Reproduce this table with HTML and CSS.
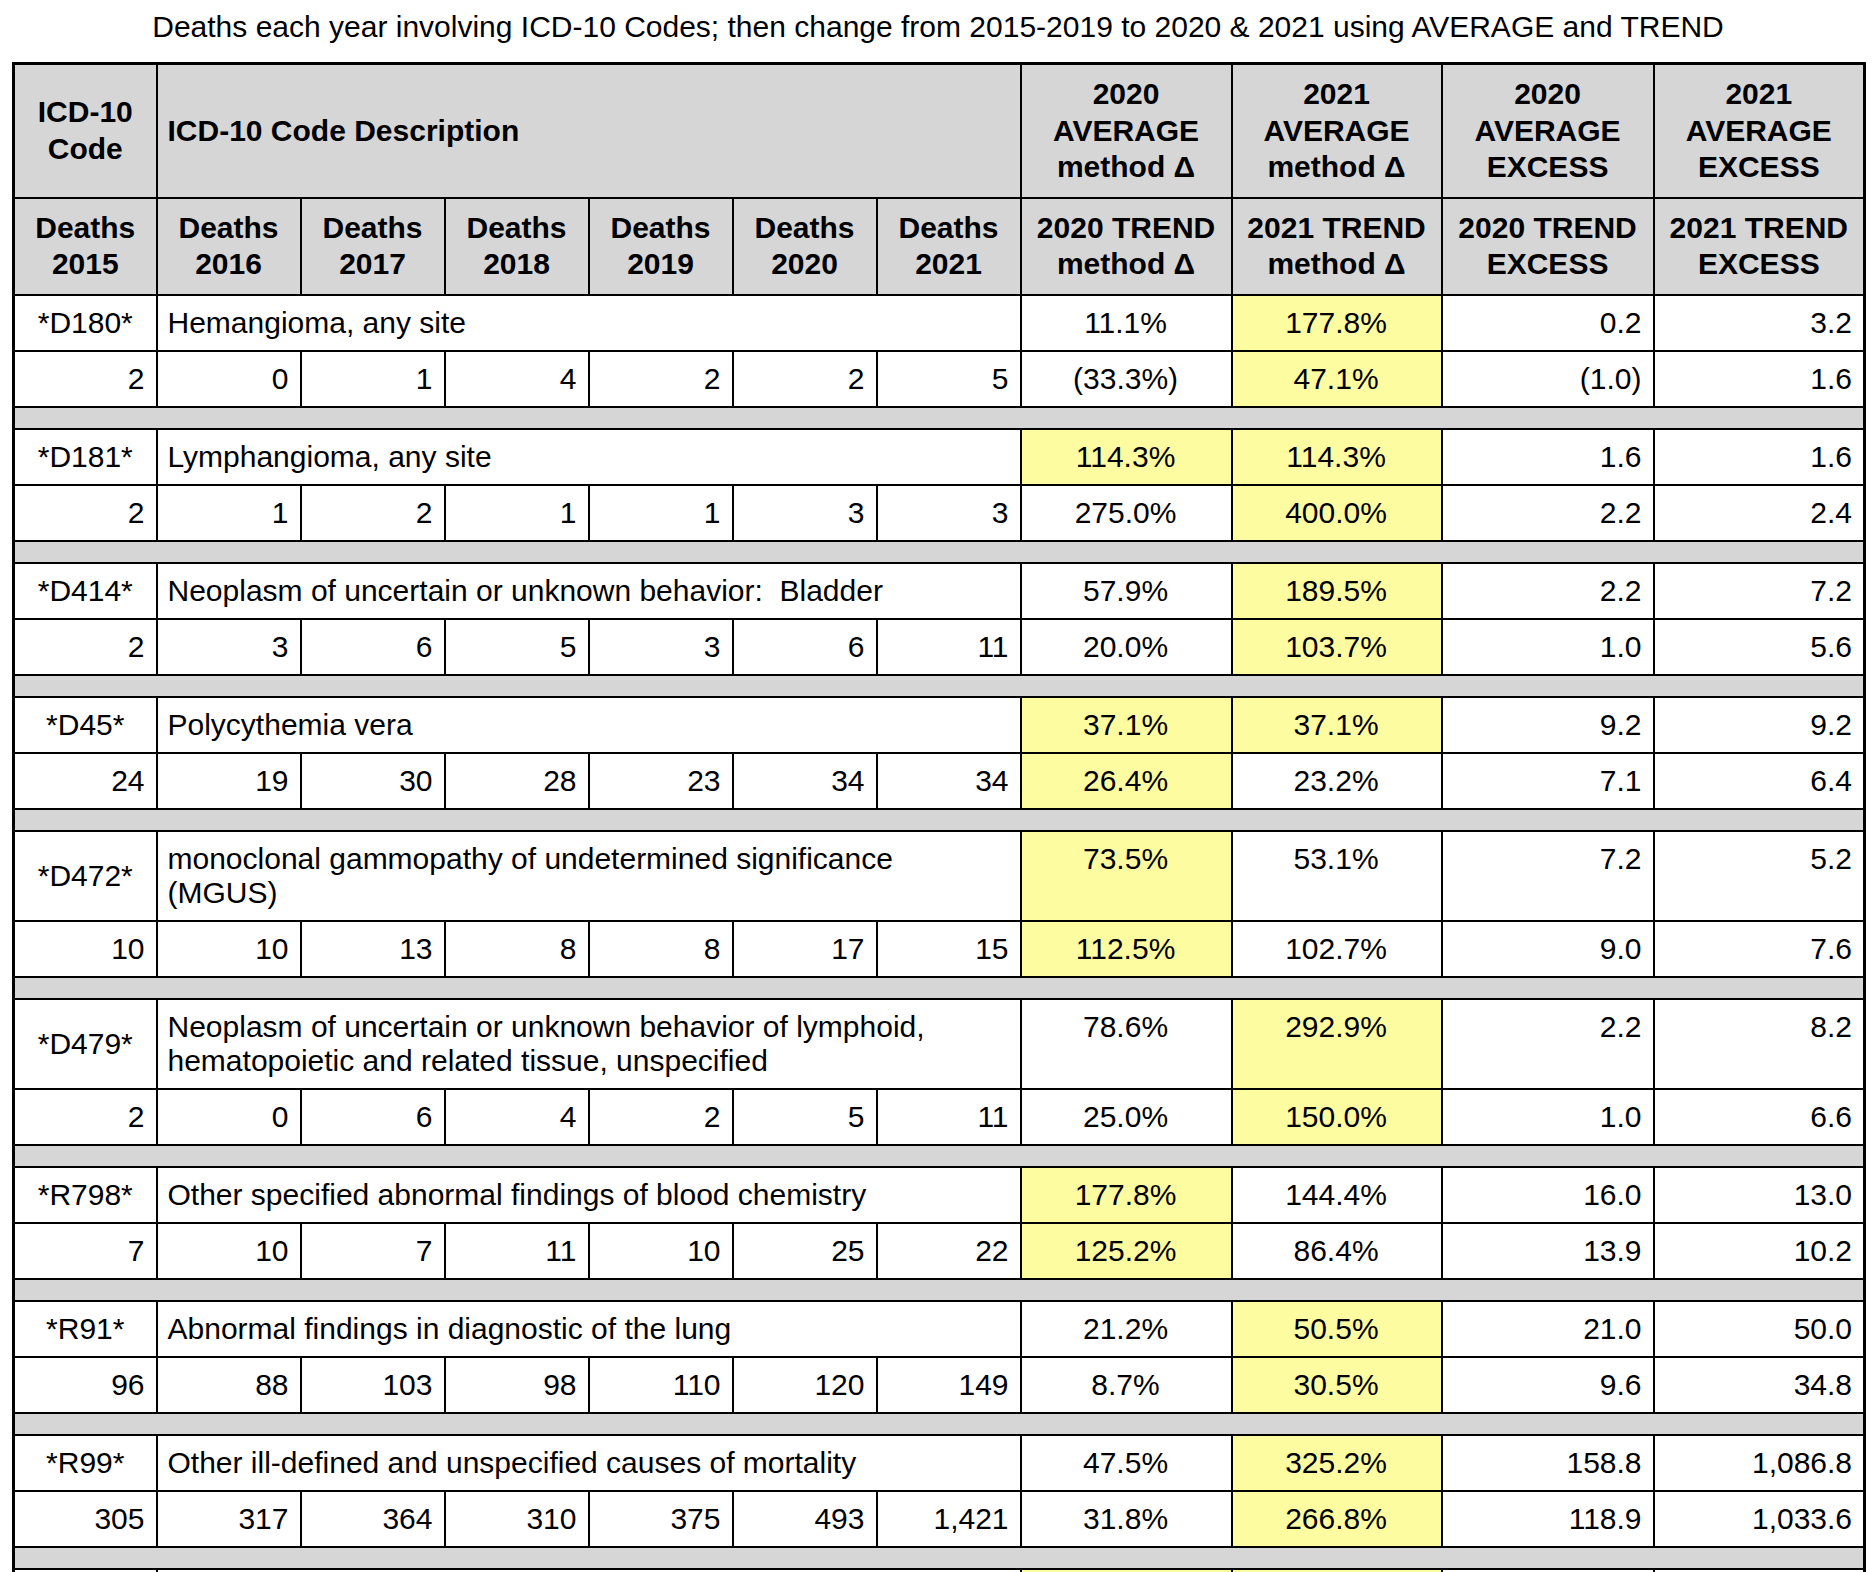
FILE: index.html
```html
<!DOCTYPE html>
<html>
<head>
<meta charset="utf-8">
<link rel="stylesheet" href="styles.css">
</head>
<body>
<div class="page">
<div class="title">Deaths each year involving ICD-10 Codes; then change from 2015-2019 to 2020 &amp; 2021 using AVERAGE and TREND</div>
<table class="grid">
<colgroup>
<col class="w-code"><col class="w-d"><col class="w-d"><col class="w-d"><col class="w-d"><col class="w-d"><col class="w-d">
<col class="w-x1"><col class="w-x2"><col class="w-x3"><col class="w-x4">
</colgroup>
<thead>
<tr class="h1">
<th>ICD-10<br>Code</th>
<th colspan="6" class="hl">ICD-10 Code Description</th>
<th>2020<br>AVERAGE<br>method Δ</th>
<th>2021<br>AVERAGE<br>method Δ</th>
<th>2020<br>AVERAGE<br>EXCESS</th>
<th>2021<br>AVERAGE<br>EXCESS</th>
</tr>
<tr class="h2">
<th>Deaths<br>2015</th>
<th>Deaths<br>2016</th>
<th>Deaths<br>2017</th>
<th>Deaths<br>2018</th>
<th>Deaths<br>2019</th>
<th>Deaths<br>2020</th>
<th>Deaths<br>2021</th>
<th>2020 TREND<br>method Δ</th>
<th>2021 TREND<br>method Δ</th>
<th>2020 TREND<br>EXCESS</th>
<th>2021 TREND<br>EXCESS</th>
</tr>
</thead>
<tbody>
<tr><td class="c">*D180*</td><td colspan="6" class="d">Hemangioma, any site</td><td class="p">11.1%</td><td class="p y">177.8%</td><td class="n">0.2</td><td class="n">3.2</td></tr>
<tr><td class="n">2</td><td class="n">0</td><td class="n">1</td><td class="n">4</td><td class="n">2</td><td class="n">2</td><td class="n">5</td><td class="p">(33.3%)</td><td class="p y">47.1%</td><td class="n">(1.0)</td><td class="n">1.6</td></tr>
<tr class="sep"><td colspan="11"><div class="bar"></div></td></tr>

<tr><td class="c">*D181*</td><td colspan="6" class="d">Lymphangioma, any site</td><td class="p y">114.3%</td><td class="p y">114.3%</td><td class="n">1.6</td><td class="n">1.6</td></tr>
<tr><td class="n">2</td><td class="n">1</td><td class="n">2</td><td class="n">1</td><td class="n">1</td><td class="n">3</td><td class="n">3</td><td class="p">275.0%</td><td class="p y">400.0%</td><td class="n">2.2</td><td class="n">2.4</td></tr>
<tr class="sep"><td colspan="11"><div class="bar"></div></td></tr>

<tr><td class="c">*D414*</td><td colspan="6" class="d">Neoplasm of uncertain or unknown behavior:&nbsp; Bladder</td><td class="p">57.9%</td><td class="p y">189.5%</td><td class="n">2.2</td><td class="n">7.2</td></tr>
<tr><td class="n">2</td><td class="n">3</td><td class="n">6</td><td class="n">5</td><td class="n">3</td><td class="n">6</td><td class="n">11</td><td class="p">20.0%</td><td class="p y">103.7%</td><td class="n">1.0</td><td class="n">5.6</td></tr>
<tr class="sep"><td colspan="11"><div class="bar"></div></td></tr>

<tr><td class="c">*D45*</td><td colspan="6" class="d">Polycythemia vera</td><td class="p y">37.1%</td><td class="p y">37.1%</td><td class="n">9.2</td><td class="n">9.2</td></tr>
<tr><td class="n">24</td><td class="n">19</td><td class="n">30</td><td class="n">28</td><td class="n">23</td><td class="n">34</td><td class="n">34</td><td class="p y">26.4%</td><td class="p">23.2%</td><td class="n">7.1</td><td class="n">6.4</td></tr>
<tr class="sep"><td colspan="11"><div class="bar"></div></td></tr>

<tr><td class="c">*D472*</td><td colspan="6" class="d">monoclonal gammopathy of undetermined significance (MGUS)</td><td class="p y">73.5%</td><td class="p">53.1%</td><td class="n">7.2</td><td class="n">5.2</td></tr>
<tr><td class="n">10</td><td class="n">10</td><td class="n">13</td><td class="n">8</td><td class="n">8</td><td class="n">17</td><td class="n">15</td><td class="p y">112.5%</td><td class="p">102.7%</td><td class="n">9.0</td><td class="n">7.6</td></tr>
<tr class="sep"><td colspan="11"><div class="bar"></div></td></tr>

<tr><td class="c">*D479*</td><td colspan="6" class="d">Neoplasm of uncertain or unknown behavior of lymphoid, hematopoietic and related tissue, unspecified</td><td class="p">78.6%</td><td class="p y">292.9%</td><td class="n">2.2</td><td class="n">8.2</td></tr>
<tr><td class="n">2</td><td class="n">0</td><td class="n">6</td><td class="n">4</td><td class="n">2</td><td class="n">5</td><td class="n">11</td><td class="p">25.0%</td><td class="p y">150.0%</td><td class="n">1.0</td><td class="n">6.6</td></tr>
<tr class="sep"><td colspan="11"><div class="bar"></div></td></tr>

<tr><td class="c">*R798*</td><td colspan="6" class="d">Other specified abnormal findings of blood chemistry</td><td class="p y">177.8%</td><td class="p">144.4%</td><td class="n">16.0</td><td class="n">13.0</td></tr>
<tr><td class="n">7</td><td class="n">10</td><td class="n">7</td><td class="n">11</td><td class="n">10</td><td class="n">25</td><td class="n">22</td><td class="p y">125.2%</td><td class="p">86.4%</td><td class="n">13.9</td><td class="n">10.2</td></tr>
<tr class="sep"><td colspan="11"><div class="bar"></div></td></tr>

<tr><td class="c">*R91*</td><td colspan="6" class="d">Abnormal findings in diagnostic of the lung</td><td class="p">21.2%</td><td class="p y">50.5%</td><td class="n">21.0</td><td class="n">50.0</td></tr>
<tr><td class="n">96</td><td class="n">88</td><td class="n">103</td><td class="n">98</td><td class="n">110</td><td class="n">120</td><td class="n">149</td><td class="p">8.7%</td><td class="p y">30.5%</td><td class="n">9.6</td><td class="n">34.8</td></tr>
<tr class="sep"><td colspan="11"><div class="bar"></div></td></tr>

<tr><td class="c">*R99*</td><td colspan="6" class="d">Other ill-defined and unspecified causes of mortality</td><td class="p">47.5%</td><td class="p y">325.2%</td><td class="n">158.8</td><td class="n">1,086.8</td></tr>
<tr><td class="n">305</td><td class="n">317</td><td class="n">364</td><td class="n">310</td><td class="n">375</td><td class="n">493</td><td class="n">1,421</td><td class="p">31.8%</td><td class="p y">266.8%</td><td class="n">118.9</td><td class="n">1,033.6</td></tr>
<tr class="sep"><td colspan="11"><div class="bar"></div></td></tr>

<tr class="next"><td class="c">&nbsp;</td><td colspan="6" class="d">&nbsp;</td><td class="p y">&nbsp;</td><td class="p y">&nbsp;</td><td class="n">&nbsp;</td><td class="n">&nbsp;</td></tr>
</tbody>
</table>
</div>
</body>
</html>
```
FILE: styles.css
```css
html, body {
  margin: 0;
  padding: 0;
  background: #ffffff;
}

.page {
  padding: 10px 0 0 12px;
  font-family: "Liberation Sans", Arial, Helvetica, sans-serif;
  color: #000;
}

.title {
  width: 1852px;
  text-align: center;
  font-size: 30px;
  line-height: 34px;
  margin-bottom: 18px;
}

.grid {
  border-collapse: collapse;
  table-layout: fixed;
  width: 1851px;
  border: 3px solid #000;
  font-size: 30px;
}

.w-code { width: 143px; }
.w-d { width: 144px; }
.w-x1 { width: 211px; }
.w-x2 { width: 210px; }
.w-x3 { width: 212px; }
.w-x4 { width: 211px; }

.grid th,
.grid td {
  border: 2px solid #000;
  overflow: hidden;
}

.grid th {
  background: #d6d6d6;
  font-weight: bold;
  line-height: 36.5px;
  padding: 11px 4px;
  text-align: center;
  vertical-align: middle;
  white-space: nowrap;
}

.grid th.hl {
  text-align: left;
  padding-left: 10px;
}

.grid td {
  line-height: 34px;
  padding: 10px 11px 10px 10px;
  vertical-align: top;
  background: #fff;
}

.grid td.c {
  text-align: center;
  vertical-align: middle;
  padding-left: 4px;
  padding-right: 4px;
}

.grid td.d {
  text-align: left;
}

.grid td.n {
  text-align: right;
}

.grid td.p {
  text-align: center;
}

.grid td.y {
  background: #fdfca1;
}

.grid tr.sep td {
  padding: 0;
  background: #d6d6d6;
  line-height: 0;
  font-size: 0;
}

.bar {
  height: 20px;
}
```
